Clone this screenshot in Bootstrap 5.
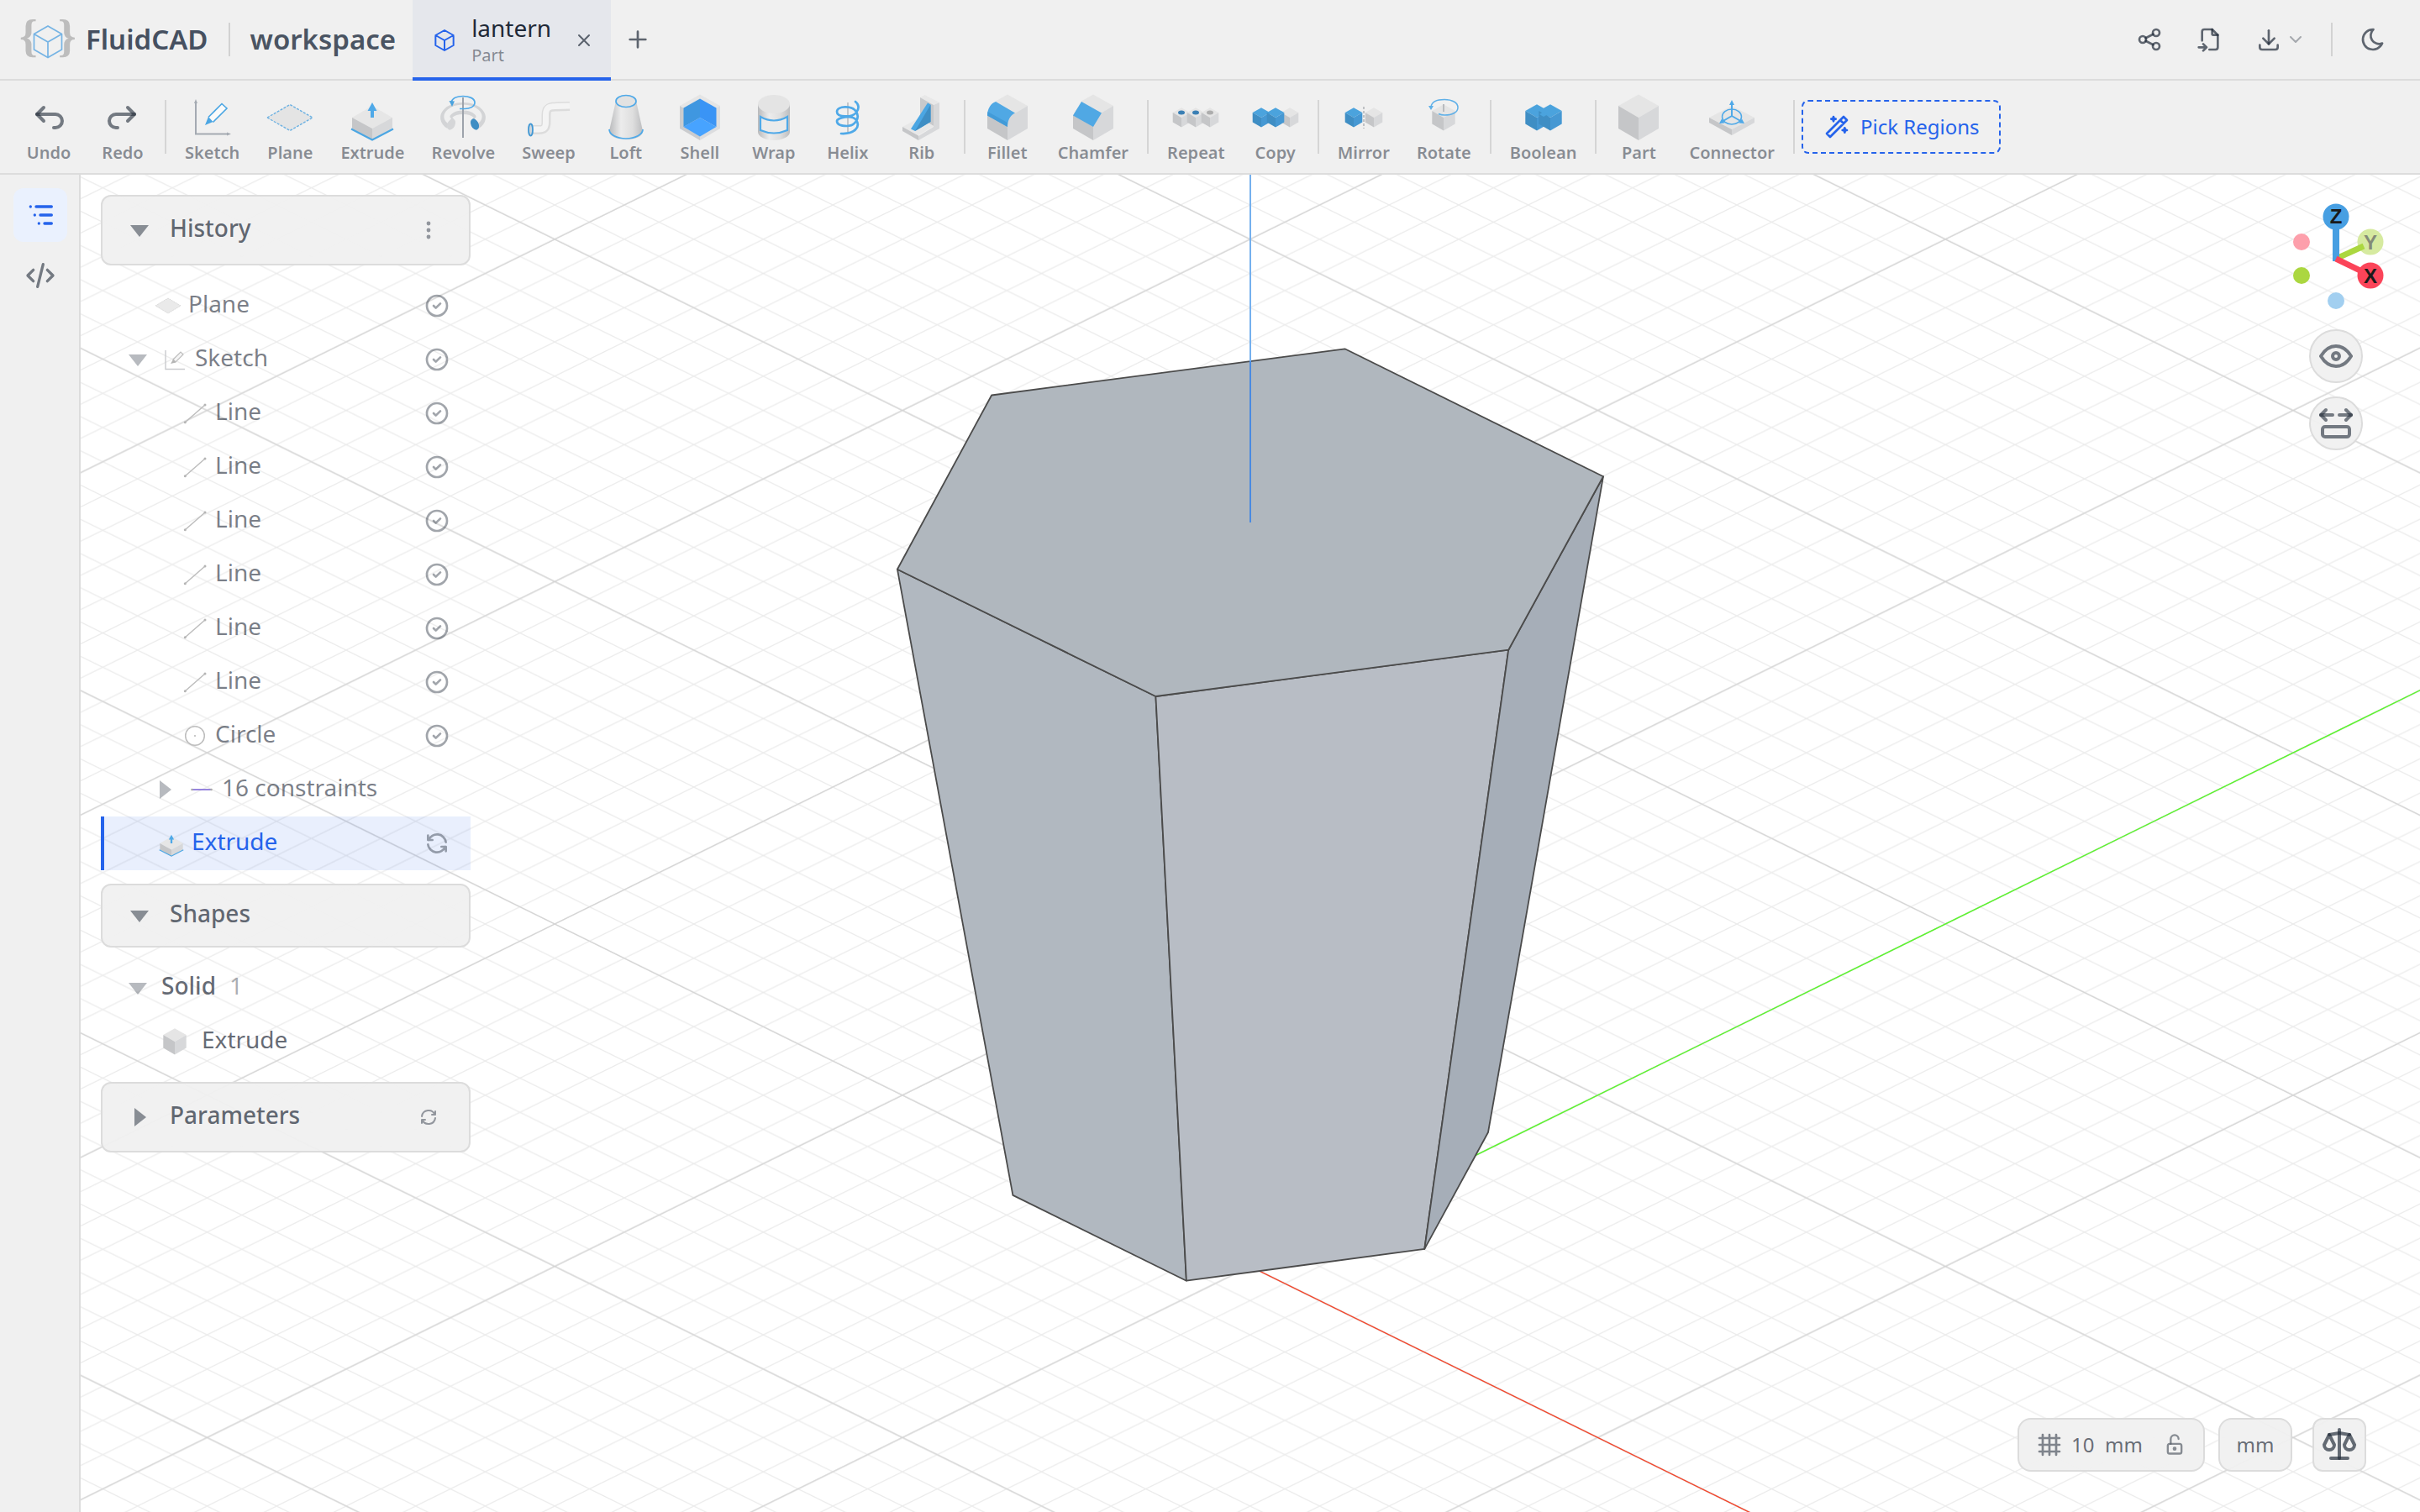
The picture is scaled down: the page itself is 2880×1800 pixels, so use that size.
<!DOCTYPE html>
<html lang="en">
<head>
<meta charset="utf-8">
<meta name="viewport" content="width=device-width, initial-scale=1">
<title>lantern - FluidCAD</title>
<link href="https://cdn.jsdelivr.net/npm/bootstrap@5.3.0/dist/css/bootstrap.min.css" rel="stylesheet">
<style>
:root{--ink:31,41,55;--chrome:#f0f0f0;--edge:#dcdcdc;--accent:#2563eb}
html,body{height:100%}
body{font-family:"Noto Sans",sans-serif;font-size:28px;line-height:40px;color:rgba(var(--ink),.7);background:#fff;overflow:hidden}
button,input{font-family:inherit;color:inherit}
svg{display:block;flex:none}
.ico{fill:none;stroke:currentColor;stroke-width:2;stroke-linecap:round;stroke-linejoin:round}
.s24{width:24px;height:24px}.s28{width:28px;height:28px}.s32{width:32px;height:32px}.s40{width:40px;height:40px}.s48{width:48px;height:48px}.s56{width:56px;height:56px}
.bare{background:none;border:0;padding:0;display:flex;align-items:center;justify-content:center}
.topbar{height:96px;background:var(--chrome);border-bottom:2px solid var(--edge)}
.brand{font-size:33px;font-weight:600;color:#465060;margin-left:12px}
.ws{font-size:33px;font-weight:600;color:#4a5462;margin:0 20px 0 24px}
.vrule{width:2px;height:40px;background:#d2d2d2;flex:none}
.doc-tab{width:236px;height:96px;background:#e5e7ec;border-bottom:4px solid var(--accent);padding:4px 20px 0 22px;align-self:flex-start}
.doc-name{font-size:28px;line-height:36px;color:rgb(var(--ink));text-decoration:none}
.doc-kind{font-size:20px;line-height:30px;color:rgba(var(--ink),.5)}
.hbtn{width:64px;height:64px}
.export-btn{padding:0 14px}
.toolbar-strip{height:112px;background:var(--chrome);border-bottom:2px solid var(--edge);padding:0 16px;gap:4px}
.tool{min-width:84px;padding:2px 14px 0;flex-direction:column;gap:4px;color:rgba(var(--ink),.5);font-size:20px;line-height:20px;font-weight:600;flex:none}
.tool .ico{color:rgba(var(--ink),.6);margin:4px 0}
.tool span{white-space:nowrap}
.tsep{width:2px;height:64px;background:#d5d5d5;margin:0 4px;flex:none}
.pick{height:64px;border:2px dashed var(--accent);border-radius:8px;color:var(--accent);font-size:24px;padding:0 24px;gap:12px;background:none}
.rail{width:96px;background:var(--chrome);border-right:2px solid var(--edge);padding:16px 14px 0 16px;gap:8px}
.rail .bare{width:64px;height:64px;border-radius:12px;color:rgba(var(--ink),.6)}
.rail .bare.on{background:#eaf1fe;color:var(--accent)}
.side{width:440px;left:24px;top:24px}
.sec{background:rgba(240,240,240,.94);border:2px solid var(--edge);border-radius:12px;padding:0 24px 0 32px;height:84px;font-weight:500;color:rgba(var(--ink),.7)}
.sec.short{height:76px}
.sec .ttl{margin-left:24px;margin-bottom:6px}
.arr{width:24px;height:24px;fill:rgba(var(--ink),.5)}
.sec .bare{width:48px;height:48px;color:rgba(var(--ink),.45)}
.node{height:64px;gap:8px;padding-right:24px;color:rgba(var(--ink),.6)}
.node .txt{margin-bottom:6px}
.node .arr{margin-right:8px;fill:rgba(var(--ink),.32)}
.node .state{margin-left:auto;color:rgba(var(--ink),.42)}
.l1{padding-left:64px}.l0{padding-left:32px}.l2{padding-left:96px}
.node.active{background:rgba(37,99,235,.1);border-left:4px solid var(--accent);color:var(--accent)}
.node.strong{color:rgba(var(--ink),.7);font-weight:500}
.node.body-item{padding-left:72px;gap:16px;color:rgba(var(--ink),.7)}
.num{font-weight:400;color:rgba(var(--ink),.4);margin-left:8px}
.right-stack{top:24px;right:24px;width:152px;gap:16px}
.round-btn{width:64px;height:64px;border-radius:50%;background:rgba(240,240,240,.94);border:2px solid var(--edge);color:rgba(var(--ink),.6)}
.foot{right:64px;bottom:48px;gap:16px;font-size:24px}
.pill{height:64px;background:rgba(240,240,240,.94);border:2px solid var(--edge);border-radius:16px;color:rgba(var(--ink),.68)}
.grid-pill{padding:0 20px}
.unit-btn{width:88px}
.mass-btn{width:64px;border-radius:12px}
.grid-in{width:28px;border:0;padding:0;background:none;font-size:24px;margin:0 12px 0 10px}
.axis-t{font:700 24px "Liberation Sans",sans-serif;text-anchor:middle}
</style>
<script src="https://cdn.jsdelivr.net/npm/bootstrap@5.3.0/dist/js/bootstrap.bundle.min.js"></script>
</head>
<body class="d-flex flex-column">
<svg width="0" height="0" class="position-absolute" aria-hidden="true">
<defs>
<linearGradient id="tube" x1="0" x2="1" y1="0" y2="0"><stop offset="0" stop-color="#b9babc"/><stop offset=".35" stop-color="#ececec"/><stop offset=".7" stop-color="#dedede"/><stop offset="1" stop-color="#bcbdbf"/></linearGradient>
<symbol id="cube" viewBox="0 0 56 56"><path d="M28 .5 52 14 28 28 4 14z" fill="#e5e5e5"/><path d="M4 14 28 28V55L4 41z" fill="#c5c6c8"/><path d="M52 14 28 28V55L52 41z" fill="#d7d8da"/></symbol>
<symbol id="cubeb" viewBox="0 0 56 56"><path d="M28 .5 52 14 28 28 4 14z" fill="#4ba3dd"/><path d="M4 14 28 28V55L4 41z" fill="#3f8ec4"/><path d="M52 14 28 28V55L52 41z" fill="#4698d3"/></symbol>
<symbol id="check" viewBox="0 0 24 24"><circle cx="12" cy="12" r="9"/><path d="M9 12l2 2l4-4"/></symbol>
<symbol id="refresh" viewBox="0 0 24 24"><path d="M20 11a8.100 8.100 0 0 0-15.500-2m-.500-4v4h4"/><path d="M4 13a8.100 8.100 0 0 0 15.500 2m.500 4v-4h-4"/></symbol>
<symbol id="seg" viewBox="0 0 32 32"><path d="M4 27 28 6" stroke="#bdbdbd" stroke-width="1.500"/><circle cx="4.300" cy="26.700" r="1.500" fill="#b5b5b5"/><circle cx="28" cy="6" r="1.500" fill="#b5b5b5"/></symbol>
<symbol id="down" viewBox="0 0 24 24"><path d="M1 6H23L12 20z"/></symbol>
<symbol id="rightw" viewBox="0 0 24 24"><path d="M6 1V23L20 12z"/></symbol>
<symbol id="extr" viewBox="0 0 56 56"><path d="M28 14 52 28 28 41 4 28z" fill="#e6e6e6"/><path d="M4 28 28 41V55L4 41z" fill="#c5c6c8"/><path d="M52 28 28 41V55L52 41z" fill="#d7d8da"/><path d="M3 41.500 28 54.500 53 41.500" fill="none" stroke="#4ba6e3" stroke-width="2"/><path d="M26 28V20H22.500L28 10 33.500 20H30V28z" fill="#4fa9e8"/></symbol>
</defs>
</svg>

<header class="topbar d-flex align-items-center">
  <a href="#" class="d-flex align-items-center text-decoration-none ms-4" aria-label="FluidCAD home">
    <svg width="66" height="96" viewBox="24 0 66 96" aria-hidden="true"><g font-family="Liberation Serif" font-weight="700" font-size="55" fill="#bdbdbd"><text x="23" y="62">{</text><text x="69" y="62">}</text></g><path d="M57 32 73.500 41.500V60L57 69.500 40.500 60V41.500zM40.500 41.500 57 51 73.500 41.500M57 51V69" fill="none" stroke="#76b4e4" stroke-width="1.700"/></svg>
    <span class="brand">FluidCAD</span>
  </a>
  <span class="vrule ms-4"></span>
  <a href="#" class="ws text-decoration-none">workspace</a>
  <div class="doc-tab d-flex align-items-center">
    <svg class="ico s32" viewBox="0 0 24 24"><path stroke="#2563eb" stroke-width="1.500" d="M12 3l8 4.500v9l-8 4.500l-8-4.500v-9zM12 12l8-4.500M12 12v9M12 12l-8-4.500"/></svg>
    <div class="d-flex flex-column ms-3 flex-grow-1"><a href="#" class="doc-name">lantern</a><span class="doc-kind">Part</span></div>
    <button class="bare s24" aria-label="Close tab"><svg class="ico s24" viewBox="0 0 24 24"><path d="M18 6l-12 12M6 6l12 12"/></svg></button>
  </div>
  <button class="bare hbtn" aria-label="New tab"><svg class="ico s32" viewBox="0 0 24 24"><path d="M12 5v14M5 12h14"/></svg></button>
  <div class="ms-auto me-4 d-flex align-items-center gap-2">
    <button class="bare hbtn" aria-label="Share"><svg class="ico s32" viewBox="0 0 24 24"><circle cx="6" cy="12" r="3"/><circle cx="18" cy="6" r="3"/><circle cx="18" cy="18" r="3"/><path d="M8.700 10.700l6.600-3.400M8.700 13.300l6.600 3.400"/></svg></button>
    <button class="bare hbtn" aria-label="Import file"><svg class="ico s32" viewBox="0 0 24 24"><path d="M14 3v4a1 1 0 0 0 1 1h4"/><path d="M5 13v-8a2 2 0 0 1 2-2h7l5 5v11a2 2 0 0 1-2 2h-5.500m-9.500-2h7m-3-3l3 3l-3 3"/></svg></button>
    <button class="bare gap-1 export-btn" aria-label="Download"><svg class="ico s32" viewBox="0 0 24 24"><path d="M4 17v2a2 2 0 0 0 2 2h12a2 2 0 0 0 2-2v-2"/><path d="M7 11l5 5l5-5"/><path d="M12 4v12"/></svg><svg class="ico s24 opacity-50" viewBox="0 0 24 24"><path d="M6 9l6 6l6-6"/></svg></button>
    <span class="vrule mx-2"></span>
    <button class="bare hbtn" aria-label="Dark theme"><svg class="ico s32" viewBox="0 0 24 24"><path d="M12 3c.132 0 .263 0 .393 0a7.500 7.500 0 0 0 7.920 12.446a9 9 0 1 1-8.313-12.454z"/></svg></button>
  </div>
</header>

<nav class="toolbar-strip d-flex align-items-center" aria-label="Tools">
  <button class="bare tool"><svg class="ico s48" viewBox="0 0 24 24"><path d="M9 14l-4-4l4-4"/><path d="M5 10h11a4 4 0 1 1 0 8h-1"/></svg><span>Undo</span></button>
  <button class="bare tool"><svg class="ico s48" viewBox="0 0 24 24"><path d="M15 14l4-4l-4-4"/><path d="M19 10h-11a4 4 0 1 0 0 8h1"/></svg><span>Redo</span></button>
  <span class="tsep"></span>
  <button class="bare tool"><svg class="s56" viewBox="0 0 56 56"><path d="M8 10V47.500H46" fill="none" stroke="#a4aab2" stroke-width="2"/><path d="M6 11 8 6 10 11zM45 45.500 50 47.500 45 49.500z" fill="#a4aab2"/><path d="M23 27.500 39 11.500 45 17 28.500 33.500" fill="#fafafa" stroke="#4ba6e3" stroke-width="1.600"/><path d="M23 27 28.500 33 19 37z" fill="#4ba6e3"/></svg><span>Sketch</span></button>
  <button class="bare tool"><svg class="s56" viewBox="0 0 56 56"><path d="M1 28 28 12.500 55 28 28 43.500z" fill="#e4e4e4" stroke="#6cb1e2" stroke-width="1.400" stroke-dasharray="3 1.500"/></svg><span>Plane</span></button>
  <button class="bare tool"><svg class="s56"><use href="#extr"/></svg><span>Extrude</span></button>
  <button class="bare tool"><svg class="s56" viewBox="0 0 56 56"><g fill="none"><path d="M13 35C1 27 13 17 28 17S55 27 43 35" stroke="#d3d4d6" stroke-width="14"/><path d="M12 32C3 25 15 16 28 16S53 25 44 32" stroke="#f0f0f0" stroke-width="7"/></g><ellipse cx="14" cy="36" rx="4.500" ry="7" transform="rotate(25 14 36)" fill="#d5d6d8"/><ellipse cx="42" cy="36" rx="4.500" ry="7" transform="rotate(-25 42 36)" fill="#3f8ec4"/><path d="M28 4V52" stroke="#9da3ab" stroke-width="2"/><path d="M14 10C15 5 21 2.500 28 2.500S42 5 42 10 36 17.500 30 17.500H24" fill="none" stroke="#4fa9e8" stroke-width="1.700"/><path d="M11.500 8 18 8.500 15 15z" fill="#4ba3dd"/></svg><span>Revolve</span></button>
  <button class="bare tool"><svg class="s56" viewBox="0 0 56 56"><g fill="none"><path d="M7 42.500H16C23 42.500 25 40 25 33V25C25 17 28 15 36 15L53 14.500" stroke="#dcdcdc" stroke-width="11"/><path d="M7 42H16C23 42 24.500 39.500 24.500 33V25C24.500 16.500 28 14.500 36 14.500L53 14" stroke="#f4f4f4" stroke-width="7"/></g><ellipse cx="6.500" cy="42.500" rx="2.500" ry="7" fill="#cfd6dc" stroke="#4298d4" stroke-width="1.800"/></svg><span>Sweep</span></button>
  <button class="bare tool"><svg class="s56" viewBox="0 0 56 56"><path d="M16 8 8 44A20 10.500 0 0 0 48 44L40 8z" fill="url(#tube)"/><path d="M8 42A20 11 0 1 0 48 42" fill="none" stroke="#4fa9e8" stroke-width="1.700"/><ellipse cx="28" cy="8.500" rx="12" ry="7" fill="#e2e2e2" stroke="#4fa9e8" stroke-width="1.700"/></svg><span>Loft</span></button>
  <button class="bare tool"><svg class="s56" viewBox="0 0 56 56"><path d="M28 .5 52 14 28 28 4 14z" fill="#e5e5e5"/><path d="M4 14 28 28V55L4 41z" fill="#cbccce"/><path d="M52 14 28 28V55L52 41z" fill="#dcdddf"/><path d="M28 5.500V28L8.500 39V16.500z" fill="#3f97e0"/><path d="M28 5.500V28L47.500 39V16.500z" fill="#3a94f5"/><path d="M28 28 8.500 39 28 50.500 47.500 39z" fill="#47a3ff"/></svg><span>Shell</span></button>
  <button class="bare tool"><svg class="s56" viewBox="0 0 56 56"><path d="M9 12V45A19 10 0 0 0 47 45V12z" fill="url(#tube)"/><ellipse cx="28" cy="12" rx="19" ry="11" fill="#e4e4e4"/><path d="M12 27Q28 36 44 27V43Q28 50 12 43z" fill="#ebebeb" stroke="#4fa9e8" stroke-width="2.200"/></svg><span>Wrap</span></button>
  <button class="bare tool"><svg class="s56" viewBox="0 0 56 56"><path d="M28 10V45" stroke="#b4b8bd" stroke-width="1.500"/><path d="M37 9C41 12 42 17 38 22 33 28 15 28 15 21S33 13 38 21 36 38 27 38 15 36 15 32 33 24 38 31 37 48 20 47" fill="none" stroke="#4fa9e8" stroke-width="2.700" stroke-linecap="round"/></svg><span>Helix</span></button>
  <button class="bare tool"><svg class="s56" viewBox="0 0 56 56"><path d="M26 4 31.500 1 49 10 42 13z" fill="#e8e8e8"/><path d="M26 4 42 13V38L26 30z" fill="#c8c9cb"/><path d="M42 13 49 10V41L24 55V50L42 39z" fill="#d7d8da"/><path d="M5 39 26 28 42 38 24 49z" fill="#e8e8e8"/><path d="M5 39 24 49.500V55L5 44z" fill="#c5c6c8"/><path d="M35 10.500 15 41.500 20 44 38.500 33V12.500z" fill="#4ba6e3"/><path d="M38.500 12.500V33L20 44z" fill="#3f8ec4"/></svg><span>Rib</span></button>
  <span class="tsep"></span>
  <button class="bare tool"><svg class="s56" viewBox="0 0 56 56"><use href="#cube"/><path d="M0 0H14V9L4 25.500H0z" fill="#f0f0f0"/><path d="M28 28 38 22 28 39z" fill="#d7d8da"/><path d="M14 9 37 22.500C31 25 28 32 28 39L4 25.500C4 18 8 11 14 9z" fill="#50a8e4"/><path d="M4 25.500 28 39V34L4.500 21z" fill="#429bd8"/></svg><span>Fillet</span></button>
  <button class="bare tool"><svg class="s56" viewBox="0 0 56 56"><use href="#cube"/><path d="M0 0H14V9L4 25.500H0z" fill="#f0f0f0"/><path d="M14 9 38 22.500 28 39 4 25.500z" fill="#50a8e4"/></svg><span>Chamfer</span></button>
  <span class="tsep"></span>
  <button class="bare tool"><svg class="s56" viewBox="0 0 56 56"><use href="#cube" x="-1" y="16" width="24" height="24"/><use href="#cube" x="16" y="16" width="24" height="24"/><use href="#cube" x="33" y="16" width="24" height="24"/><ellipse cx="11" cy="22" rx="4" ry="2.500" fill="#3a7fb4"/><ellipse cx="28" cy="22" rx="4" ry="2.500" fill="#3a7fb4"/><ellipse cx="45" cy="22" rx="4" ry="2.500" fill="#adadad"/></svg><span>Repeat</span></button>
  <button class="bare tool"><svg class="s56" viewBox="0 0 56 56"><use href="#cube" x="33" y="16" width="24" height="24"/><use href="#cubeb" x="-1" y="16" width="24" height="24"/><use href="#cubeb" x="16" y="16" width="24" height="24"/></svg><span>Copy</span></button>
  <span class="tsep"></span>
  <button class="bare tool"><svg class="s56" viewBox="0 0 56 56"><use href="#cubeb" x="4" y="16" width="24" height="24"/><use href="#cube" x="28" y="16" width="24" height="24"/><path d="M28 15V41" stroke="#bfc1c4" stroke-width="2" stroke-dasharray="3 2"/></svg><span>Mirror</span></button>
  <button class="bare tool"><svg class="s56" viewBox="0 0 56 56"><use href="#cube" x="12" y="12" width="32" height="32"/><path d="M28 12V21" stroke="#a9adb2" stroke-width="1.500"/><path d="M13 15C14 9 20 6.500 29 6.500S45 10 45 16 38 25 29 25Q25 25 22 23.500" fill="none" stroke="#5fb0e8" stroke-width="1.500"/><path d="M10 14H16L13 19z" fill="#5fb0e8"/></svg><span>Rotate</span></button>
  <span class="tsep"></span>
  <button class="bare tool"><svg class="s56" viewBox="0 0 56 56"><use href="#cubeb" x="4" y="12" width="32" height="32"/><use href="#cubeb" x="20" y="12" width="32" height="32"/><path d="M28 21 33 24 28 27 23 24z" fill="#4ba3dd"/></svg><span>Boolean</span></button>
  <span class="tsep"></span>
  <button class="bare tool"><svg class="s56"><use href="#cube"/></svg><span>Part</span></button>
  <button class="bare tool"><svg class="s56" viewBox="0 0 56 56"><path d="M28 14 55 28 28 42 1 28z" fill="#e5e5e5"/><path d="M1 28 28 42V49L1 34z" fill="#c5c6c8"/><path d="M55 28 28 42V49L55 34z" fill="#d7d8da"/><g fill="none" stroke="#4fa9e8"><ellipse cx="28" cy="27" rx="11.500" ry="9" stroke-width="1.500"/><path d="M28 11V26L16 33M28 26 40 33" stroke-width="2"/></g><path d="M25 13 28 7 31 13zM13 35 16 29.500 19.500 34.500zM43 35 40 29.500 36.500 34.500z" fill="#4fa9e8"/></svg><span>Connector</span></button>
  <span class="tsep"></span>
  <button class="pick d-flex align-items-center text-nowrap"><svg class="ico s32" viewBox="0 0 24 24"><path d="M6 21l15-15l-3-3l-15 15l3 3M15 6l3 3M9 3a2 2 0 0 0 2 2a2 2 0 0 0-2 2a2 2 0 0 0-2-2a2 2 0 0 0 2-2M19 13a2 2 0 0 0 2 2a2 2 0 0 0-2 2a2 2 0 0 0-2-2a2 2 0 0 0 2-2"/></svg><span>Pick Regions</span></button>
</nav>

<div class="d-flex flex-grow-1 overflow-hidden">
  <aside class="rail d-flex flex-column flex-shrink-0">
    <button class="bare on" aria-label="Model tree"><svg class="ico s40" viewBox="0 0 24 24"><path d="M9 6h11M12 12h8M15 18h5M5 6v.01M8 12v.01M11 18v.01"/></svg></button>
    <button class="bare" aria-label="Code"><svg class="ico s40" viewBox="0 0 24 24"><path d="M7 8l-4 4l4 4M17 8l4 4l-4 4M14 4l-4 16"/></svg></button>
  </aside>
  <main class="position-relative flex-grow-1 overflow-hidden">
    <svg class="w-100 h-100 position-absolute top-0 start-0" viewBox="96 208 2784 1592" preserveAspectRatio="xMidYMid slice" role="img" aria-label="Hexagonal loft">
      <defs>
        <pattern id="minor" patternUnits="userSpaceOnUse" x="1487.700" y="1507.600" width="82.752" height="40.760"><path d="M-2 -.985 84.752 41.745M-2 41.745 84.752 -.985" stroke="#ebebeb" stroke-width="1.200"/></pattern>
        <pattern id="major" patternUnits="userSpaceOnUse" x="1487.700" y="1507.600" width="827.520" height="407.600"><path d="M-2 -.985 829.520 408.585M-2 408.585 829.520 -.985" stroke="#d4d4d4" stroke-width="1.300"/></pattern>
      </defs>
      <rect x="96" y="208" width="2784" height="1592" fill="url(#minor)"/>
      <rect x="96" y="208" width="2784" height="1592" fill="url(#major)"/>
      <path d="M1487.700 1507.600 2900 811.900" stroke="#5cf52e" stroke-width="1.400"/>
      <path d="M1487.700 1507.600 2100 1809.200" stroke="#f5452a" stroke-width="1.400"/>
      <g stroke="#4b4b4b" stroke-width="1.800" stroke-linejoin="round">
        <path d="M1067.900 677.700 1375.400 829 1411.900 1524.700 1205.400 1422.900z" fill="#b1b8c0"/>
        <path d="M1375.400 829 1795.200 773.700 1695.300 1486.900 1411.900 1524.700z" fill="#b8bdc5"/>
        <path d="M1795.200 773.700 1908 567.200 1771 1348 1695.300 1486.900z" fill="#a6aeb8"/>
        <path d="M1180.100 470.500 1600.500 415.300 1908 567.200 1795.200 773.700 1375.400 829 1067.900 677.700z" fill="#b0b7be"/>
      </g>
      <path d="M1488 208V431" stroke="#75b0ee" stroke-width="2"/>
      <path d="M1488 430V622" stroke="#4a8ae0" stroke-width="2"/>
    </svg>

    <section class="side position-absolute">
      <div class="sec d-flex align-items-center mb-3"><svg class="arr"><use href="#down"/></svg><span class="ttl">History</span><button class="bare ms-auto" aria-label="History menu"><svg width="8" height="28" viewBox="0 0 8 28" fill="currentColor"><circle cx="4" cy="6" r="2.400"/><circle cx="4" cy="14" r="2.400"/><circle cx="4" cy="22" r="2.400"/></svg></button></div>
      <ul class="list-unstyled mb-3">
        <li class="node l1 d-flex align-items-center"><svg class="s32" viewBox="0 0 32 32"><path d="M1 16 16 7 31 16 16 25z" fill="#eaeaea" stroke="#cfcfcf" stroke-dasharray="1 1"/></svg><span class="txt">Plane</span><svg class="ico s32 state"><use href="#check"/></svg></li>
        <li class="node l0 d-flex align-items-center"><svg class="arr"><use href="#down"/></svg><svg class="s32" viewBox="0 0 32 32"><path d="M5 5V27.500H28" fill="none" stroke="#c9cbce" stroke-width="1.400"/><path d="M14 16 23 7 26 10 17 19z" fill="#f5f5f5" stroke="#bdbdbd" stroke-width="1.200"/><path d="M14 16 17.500 19.500 11 21z" fill="#b5b5b5"/></svg><span class="txt">Sketch</span><svg class="ico s32 state"><use href="#check"/></svg></li>
        <li class="node l2 d-flex align-items-center"><svg class="s32"><use href="#seg"/></svg><span class="txt">Line</span><svg class="ico s32 state"><use href="#check"/></svg></li>
        <li class="node l2 d-flex align-items-center"><svg class="s32"><use href="#seg"/></svg><span class="txt">Line</span><svg class="ico s32 state"><use href="#check"/></svg></li>
        <li class="node l2 d-flex align-items-center"><svg class="s32"><use href="#seg"/></svg><span class="txt">Line</span><svg class="ico s32 state"><use href="#check"/></svg></li>
        <li class="node l2 d-flex align-items-center"><svg class="s32"><use href="#seg"/></svg><span class="txt">Line</span><svg class="ico s32 state"><use href="#check"/></svg></li>
        <li class="node l2 d-flex align-items-center"><svg class="s32"><use href="#seg"/></svg><span class="txt">Line</span><svg class="ico s32 state"><use href="#check"/></svg></li>
        <li class="node l2 d-flex align-items-center"><svg class="s32"><use href="#seg"/></svg><span class="txt">Line</span><svg class="ico s32 state"><use href="#check"/></svg></li>
        <li class="node l2 d-flex align-items-center"><svg class="s32" viewBox="0 0 32 32"><circle cx="16" cy="16" r="11.300" fill="none" stroke="#bdbdbd" stroke-width="1.500"/><circle cx="16" cy="16" r="1" fill="#b5b5b5"/></svg><span class="txt">Circle</span><svg class="ico s32 state"><use href="#check"/></svg></li>
        <li class="node l1 d-flex align-items-center"><svg class="arr"><use href="#rightw"/></svg><svg class="s32" viewBox="0 0 32 32"><path d="M4 16H28" stroke="#8570d8" stroke-width="1.700"/><circle cx="4.500" cy="16" r="1.300" fill="#aaa"/><circle cx="27.500" cy="16" r="1.300" fill="#aaa"/></svg><span class="txt">16 constraints</span></li>
        <li class="node l1 active d-flex align-items-center"><svg class="s32"><use href="#extr"/></svg><span class="txt">Extrude</span><svg class="ico s32 state"><use href="#refresh"/></svg></li>
      </ul>
      <div class="sec short d-flex align-items-center mb-3"><svg class="arr"><use href="#down"/></svg><span class="ttl">Shapes</span></div>
      <ul class="list-unstyled mb-3">
        <li class="node l0 strong d-flex align-items-center"><svg class="arr"><use href="#down"/></svg><span class="txt">Solid</span><span class="txt num">1</span></li>
        <li class="node body-item d-flex align-items-center"><svg class="s32"><use href="#cube"/></svg><span class="txt">Extrude</span></li>
      </ul>
      <div class="sec d-flex align-items-center"><svg class="arr"><use href="#rightw"/></svg><span class="ttl">Parameters</span><button class="bare ms-auto" aria-label="Reset parameters"><svg class="ico s24" viewBox="0 0 24 24"><g transform="matrix(-1 0 0 1 24 0)"><path d="M20 11a8.100 8.100 0 0 0-15.500-2m-.500-4v4h4"/><path d="M4 13a8.100 8.100 0 0 0 15.500 2m.500 4v-4h-4"/></g></svg></button></div>
    </section>

    <div class="right-stack position-absolute d-flex flex-column align-items-center">
      <svg width="152" height="144" viewBox="2704 232 152 144" aria-label="View axes">
        <circle cx="2739" cy="288" r="10" fill="#fd9fab"/><circle cx="2780" cy="358" r="10" fill="#a2cff0"/><circle cx="2821" cy="288" r="15.500" fill="#d6eaa0"/>
        <path d="M2780 308 2813 293" stroke="#abd740" stroke-width="7"/><path d="M2780 311V258" stroke="#479fe2" stroke-width="8"/><path d="M2780 308 2821 328" stroke="#fb4459" stroke-width="7"/>
        <circle cx="2739" cy="328" r="10" fill="#abd740"/><circle cx="2780" cy="258" r="15.500" fill="#479fe2"/><circle cx="2821" cy="328" r="15.500" fill="#fb4459"/>
        <text class="axis-t" x="2780" y="266" fill="#1a1a1a">Z</text><text class="axis-t" x="2821" y="297" fill="#848b78">Y</text><text class="axis-t" x="2821" y="337" fill="#1a1a1a">X</text>
      </svg>
      <button class="bare round-btn" aria-label="Visibility"><svg class="ico s48" viewBox="0 0 24 24"><path d="M10 12a2 2 0 1 0 4 0a2 2 0 0 0-4 0"/><path d="M21 12c-2.400 4-5.400 6-9 6c-3.600 0-6.600-2-9-6c2.400-4 5.400-6 9-6c3.600 0 6.600 2 9 6"/></svg></button>
      <button class="bare round-btn" aria-label="Measure"><svg class="ico s48" viewBox="0 0 24 24"><rect x="4" y="14" width="16" height="6" rx="1.500"/><path d="M3 7h7"/><path d="M21 7h-7"/><path d="M6 10l-3-3l3-3"/><path d="M18 10l3-3l-3-3"/></svg></button>
    </div>

    <div class="foot position-absolute d-flex">
      <div class="pill grid-pill d-flex align-items-center"><svg class="ico s32" viewBox="0 0 24 24" opacity=".8"><path d="M3 6h18M3 12h18M3 18h18M6 3v18M12 3v18M18 3v18"/></svg><label class="d-flex align-items-center"><input class="grid-in" value="10" aria-label="Grid size">mm</label><button class="bare ms-4" aria-label="Lock grid"><svg class="ico s28" viewBox="0 0 24 24" opacity=".75"><rect x="5" y="11" width="14" height="10" rx="2"/><circle cx="12" cy="16" r="1"/><path d="M8 11v-5a4 4 0 0 1 8 0"/></svg></button></div>
      <button class="pill unit-btn" aria-label="Units">mm</button>
      <button class="pill bare mass-btn ms-2" aria-label="Mass properties"><svg class="ico s48" viewBox="0 0 24 24"><path d="M7 20h10"/><path d="M6 6l6-1l6 1"/><path d="M12 3v17"/><path d="M9 12l-3-6l-3 6a3 3 0 0 0 6 0"/><path d="M21 12l-3-6l-3 6a3 3 0 0 0 6 0"/></svg></button>
    </div>
  </main>
</div>
</body>
</html>
